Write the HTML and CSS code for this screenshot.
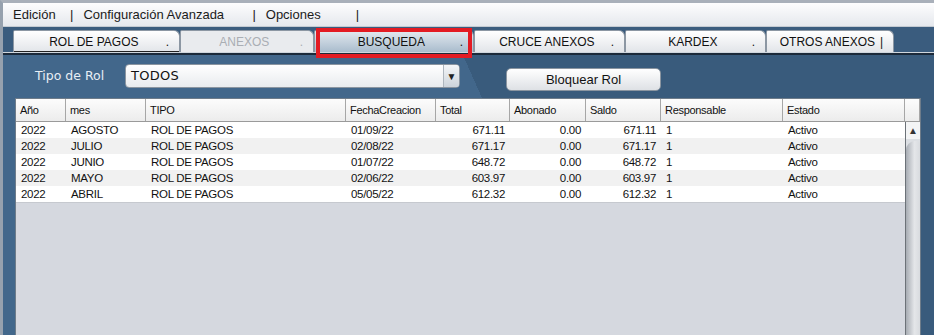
FILE: index.html
```html
<!DOCTYPE html>
<html lang="es">
<head>
  <meta charset="UTF-8" />
  <meta name="viewport" content="width=device-width, initial-scale=1.0" />
  <title>Rol de Pagos - Busqueda</title>
  <link rel="stylesheet" href="styles.css">
</head>
<body>
  <div class="window">
    <div class="menubar">
      <span class="menu-item menu-edit">Edición</span><span class="sep">|</span>
      <span class="menu-item menu-config">Configuración Avanzada</span><span class="sep">|</span>
      <span class="menu-item menu-options">Opciones</span><span class="sep">|</span>
    </div>

    <div class="tabs">
      <div class="tab tab-rol selected"><span class="tab-label">ROL DE PAGOS</span><span class="tab-dot">.</span></div>
      <div class="tab tab-anexos disabled"><span class="tab-label">ANEXOS</span><span class="tab-dot">.</span></div>
      <div class="tab tab-busqueda active"><span class="tab-label">BUSQUEDA</span><span class="tab-dot">.</span><div class="highlight"></div></div>
      <div class="tab tab-cruce"><span class="tab-label">CRUCE ANEXOS</span><span class="tab-dot">.</span></div>
      <div class="tab tab-kardex"><span class="tab-label">KARDEX</span><span class="tab-dot">.</span></div>
      <div class="tab tab-otros"><span class="tab-label">OTROS ANEXOS</span><span class="tab-dot">|</span></div>
    </div>

    <div class="panel">
      <div class="filters">
        <label class="filter-label">Tipo de Rol</label>
        <div class="select">
          <span class="select-value">TODOS</span>
          <span class="select-arrow">&#9660;</span>
        </div>
        <button class="btn">Bloquear Rol</button>
      </div>

      <div class="grid">
        <div class="grid-head">
          <span>Año</span><span>mes</span><span>TIPO</span><span>FechaCreacion</span><span>Total</span>
          <span>Abonado</span><span>Saldo</span><span>Responsable</span><span>Estado</span><span></span>
        </div>
        <div class="grid-body">
          <div class="rows">
            <div class="row"><span>2022</span><span>AGOSTO</span><span>ROL DE PAGOS</span><span>01/09/22</span><span class="num">671.11</span><span class="num">0.00</span><span class="num">671.11</span><span>1</span><span>Activo</span></div>
            <div class="row"><span>2022</span><span>JULIO</span><span>ROL DE PAGOS</span><span>02/08/22</span><span class="num">671.17</span><span class="num">0.00</span><span class="num">671.17</span><span>1</span><span>Activo</span></div>
            <div class="row"><span>2022</span><span>JUNIO</span><span>ROL DE PAGOS</span><span>01/07/22</span><span class="num">648.72</span><span class="num">0.00</span><span class="num">648.72</span><span>1</span><span>Activo</span></div>
            <div class="row"><span>2022</span><span>MAYO</span><span>ROL DE PAGOS</span><span>02/06/22</span><span class="num">603.97</span><span class="num">0.00</span><span class="num">603.97</span><span>1</span><span>Activo</span></div>
            <div class="row"><span>2022</span><span>ABRIL</span><span>ROL DE PAGOS</span><span>05/05/22</span><span class="num">612.32</span><span class="num">0.00</span><span class="num">612.32</span><span>1</span><span>Activo</span></div>
          </div>
          <div class="scrollbar">
            <div class="scroll-up">&#9650;</div>
            <div class="scroll-thumb"></div>
          </div>
        </div>
      </div>
    </div>
  </div>
</body>
</html>
```

FILE: styles.css
```css
* {
  margin: 0; padding: 0; box-sizing: border-box;
}
html, body {
  height: 100%;
}
body {
  background: #3b5e80;
  font-family: "Liberation Sans", Arial, sans-serif;
  overflow: hidden;
}
.window {
  height: 100vh;
  display: flex;
  flex-direction: column;
  border-top: 3px solid #a9b0ba;
  border-left: 3px solid #96a1ae;
}

/* menu */
.menubar {
  height: 24px;
  display: flex;
  align-items: center;
  padding-left: 10px;
  background: linear-gradient(#fdfdfe, #e5e8ed);
  border-bottom: 1px solid #c3cad2;
  font-size: 13px;
  color: #1b1b1b;
}
.menu-edit { min-width: 57px; }
.menu-config { min-width: 169px; }
.menu-options { min-width: 90px; }
.sep {
  margin-right: 10px;
}

/* tabs */
.tabs {
  display: flex;
  padding: 3px 0 3px 10px;
  background: linear-gradient(to top, #1c2a3a 0, #1c2a3a 2px, #cfd6dd 2px, #cfd6dd 3px, #3a5c7e 3px);
}
.tab {
  height: 22px;
  display: flex;
  align-items: center;
  padding: 0 10px 0 8px;
  font-size: 12px;
  color: #111;
  background: linear-gradient(#ffffff, #e2e5e9);
  border: 1px solid #8c97a3;
  border-bottom: none;
  border-radius: 2px 6px 0 0;
}
.tab-label {
  flex: 1;
  text-align: center;
}
.tab.selected {
  box-shadow: inset 0 -1px 0 #222;
}
.tab.disabled {
  background: #e9ebee;
  color: #a9aeb4;
}
.tab.active {
  position: relative;
  background: linear-gradient(#e3e9ef, #a9bccd);
}
.highlight {
  position: absolute;
  top: -3px;
  bottom: -6px;
  left: 1px;
  right: 1px;
  border: 4px solid #e31b23;
}
.tab-rol { width: 167px; }
.tab-anexos { width: 134px; }
.tab-busqueda { width: 160px; }
.tab-cruce { width: 151px; }
.tab-kardex { width: 141px; }
.tab-otros { width: 128px; }

/* panel */
.panel {
  flex: 1;
  display: flex;
  flex-direction: column;
  padding: 0 13px 0 12px;
  background: linear-gradient(66deg, #42678b 0, #42678b 534px, #395b7c 534px);
}
.filters {
  height: 42px;
  display: flex;
  align-items: flex-start;
  padding-top: 9px;
}
.filter-label {
  margin-left: 20px;
  width: 90px;
  font-family: "DejaVu Sans", sans-serif;
  font-size: 12.5px;
  line-height: 24px;
  color: #e8eef5;
}
.select {
  width: 335px;
  height: 24px;
  display: flex;
  border: 1px solid #8b95a0;
  border-radius: 4px;
  background: linear-gradient(#ffffff, #e8ebee);
}
.select-value {
  flex: 1;
  padding-left: 5px;
  font-family: "DejaVu Sans", sans-serif;
  font-size: 13px;
  line-height: 22px;
  letter-spacing: 0.3px;
  color: #111;
}
.select-arrow {
  width: 16px;
  display: flex;
  align-items: center;
  justify-content: center;
  border-left: 1px solid #aeb6be;
  border-radius: 0 3px 3px 0;
  background: linear-gradient(#f4f6f8, #cdd4db);
  font-size: 10px;
  color: #222;
}
.btn {
  margin: 4px 0 0 46px;
  width: 155px;
  height: 23px;
  border: 1px solid #8b95a0;
  border-radius: 5px;
  background: linear-gradient(#ffffff, #dee1e5);
  font-family: "Liberation Sans", Arial, sans-serif;
  font-size: 13px;
  color: #111;
}

/* grid */
.grid {
  flex: 1;
  display: flex;
  flex-direction: column;
  margin-top: 1px;
  border: 1px solid #6e7c8a;
  border-bottom: none;
  background: #d5d8df;
  font-family: "Liberation Sans", Arial, sans-serif;
  color: #111;
}
.grid-head {
  height: 23px;
  display: grid;
  grid-template-columns: 50px 80px 200px 90px 74px 76px 75px 122px 122px 15px;
  background: linear-gradient(#fcfcfc, #ececec);
  border-bottom: 1px solid #9a9a9a;
}
.grid-head span {
  padding-left: 4px;
  border-right: 1px solid #a6a6a6;
  font-size: 11px;
  letter-spacing: -0.3px;
  line-height: 22px;
}
.grid-body {
  flex: 1;
  display: flex;
}
.rows {
  flex: 1;
}
.row {
  height: 16px;
  display: grid;
  grid-template-columns: 50px 80px 200px 90px 74px 76px 75px 122px 122px;
  background: #fff;
  font-size: 11.5px;
  letter-spacing: -0.3px;
  line-height: 17px;
}
.row:nth-child(even) {
  background: #f1f1f1;
}
.row:last-child {
  border-bottom: 1px solid #c6c9cf;
  height: 17px;
}
.row span {
  padding-left: 5px;
  white-space: nowrap;
  overflow: hidden;
}
.row span.num {
  text-align: right;
  padding: 0 5px 0 0;
}
.scrollbar {
  width: 15px;
  display: flex;
  flex-direction: column;
  border-left: 1px solid #6c7278;
  background: #dcdfe3;
}
.scroll-up {
  height: 17px;
  text-align: center;
  font-size: 10px;
  line-height: 17px;
  color: #333;
  background: #f3f4f5;
}
.scroll-thumb {
  flex: 1;
  margin-top: 2px;
  border-radius: 9px 4px 0 0;
  background: linear-gradient(to right, #a7acb3, #e4e6e9 60%, #d8dbdf);
}
```
